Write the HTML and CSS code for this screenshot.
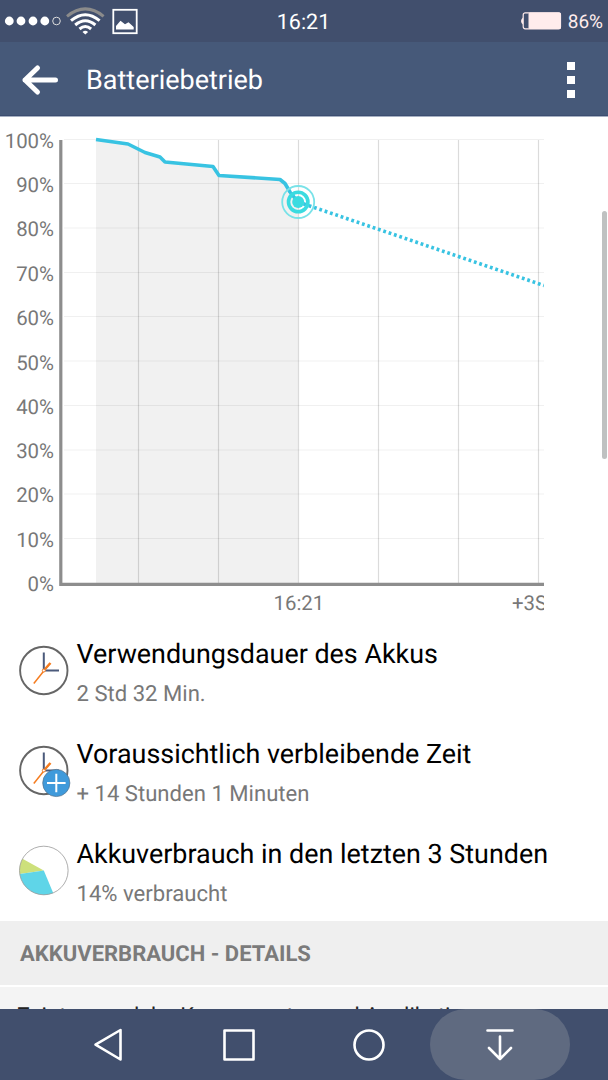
FILE: index.html
```html
<!DOCTYPE html>
<html lang="de">
<head>
	<title>Batteriebetrieb</title>
	<meta charset="utf-8">
	<link rel="stylesheet" href="styles.css">
</head>
<body>
	<header>
		<div class="status">
			<svg class="signal" width="140" height="42" viewBox="0 0 140 42">
				<g fill="#fff">
					<circle cx="9.3" cy="21" r="4.4"/>
					<circle cx="21" cy="21" r="4.4"/>
					<circle cx="33" cy="21" r="4.4"/>
					<circle cx="44.8" cy="21" r="4.4"/>
				</g>
				<circle cx="56.5" cy="21" r="3.8" fill="none" stroke="#ddd" stroke-width="1"/>
				<g fill="none" stroke="#fff" stroke-width="3">
					<path d="M67 16.3Q85.3 1.5 103.6 16.3" stroke="#8b8b8b"/>
					<path d="M71 20.7Q85.3 8.7 99.6 20.7"/>
					<path d="M75.2 25Q85.3 16.5 95.4 25"/>
					<path d="M79.5 29Q85.3 24 91.1 29"/>
				</g>
				<path d="M82.5 32Q85.3 29.5 88.1 32L85.3 34.5Z" fill="#fff"/>
				<rect x="113.3" y="9.8" width="23.4" height="23.4" fill="none" stroke="#fff" stroke-width="1.8"/>
				<path d="M116 29.5V26L120.5 20.8L125 24.3L128.5 22.3L133.7 27V29.5Z" fill="#fff"/>
			</svg>
			<span class="clock">16:21</span>
			<div class="battery">
				<svg width="42" height="20" viewBox="0 0 42 20">
					<path d="M3 6.5Q1 8 1 10T3 13.5Z" fill="#ffecec"/>
					<rect x="3.2" y="1.8" width="37.3" height="16" rx="2" fill="none" stroke="#ffecec" stroke-width="1.2"/>
					<rect x="8.5" y="1.5" width="32.5" height="16.5" rx="1.5" fill="#ffecec"/>
				</svg>
				<span>86%</span>
			</div>
		</div>
		<div class="toolbar">
			<svg width="38" height="32" viewBox="0 0 38 32">
				<path d="M34.5 16H4M16.5 4L4 16L16.5 28" fill="none" stroke="#fff" stroke-width="5" stroke-linecap="round" stroke-linejoin="round"/>
			</svg>
			<h1>Batteriebetrieb</h1>
			<div class="more"><i></i><i></i><i></i></div>
		</div>
	</header>

	<main>
		<section class="chart">
			<svg width="544" height="500" viewBox="0 117 544 500">
				<path d="M96 139.5L128 144L145 152.5L160 157L165 162L213 166.5L219 175.5L280 179.5L286 184L290 192L298 202V583H96Z" fill="#f1f1f1"/>
				<path class="rows" d="M64 139.5H544M64 183.5H544M64 228H544M64 272.5H544M64 316.5H544M64 361H544M64 405.5H544M64 450H544M64 494H544M64 538.5H544"/>
				<path class="cols" d="M138.5 140V583M218.5 140V583M298.5 140V583M378.5 140V583M458.5 140V583M538.5 140V583"/>
				<path d="M60.8 140V584.3H544" fill="none" stroke="#8d8d8d" stroke-width="3.2"/>
				<path class="line" d="M96 139.5L128 144L145 152.5L160 157L165 162L213 166.5L219 175.5L280 179.5L285 183.5L290 192L298 202"/>
				<path class="forecast" d="M298 202L544 285.5"/>
				<circle cx="298.2" cy="202" r="16" fill="none" stroke="#79e2e8" stroke-width="1.8"/>
				<circle cx="298.2" cy="202" r="9.7" fill="none" stroke="#3bdbe0" stroke-width="3.6"/>
				<circle cx="298.2" cy="202" r="6" fill="#3bdbe0"/>
				<g class="percent">
					<text x="54" y="148">100%</text>
					<text x="54" y="191.5">90%</text>
					<text x="54" y="236">80%</text>
					<text x="54" y="280.5">70%</text>
					<text x="54" y="325">60%</text>
					<text x="54" y="369.5">50%</text>
					<text x="54" y="413.5">40%</text>
					<text x="54" y="457.5">30%</text>
					<text x="54" y="502">20%</text>
					<text x="54" y="546.5">10%</text>
					<text x="54" y="591">0%</text>
				</g>
				<text x="273.5" y="610">16:21</text>
				<text x="512" y="610">+3Std.</text>
			</svg>
		</section>

		<ul class="info">
			<li>
				<svg width="52" height="52" viewBox="0 0 52 52">
					<circle cx="25.8" cy="26.5" r="23.7" fill="#fff" stroke="#666" stroke-width="1.9"/>
					<path d="M25.8 8.5V26.5H41" fill="none" stroke="#4b5a7b" stroke-width="2"/>
					<path d="M15.8 39.5L32 19.3" stroke="#f57c1f" stroke-width="1.5"/>
					<path d="M27.5 24.5L32.5 19" stroke="#f57c1f" stroke-width="2.4"/>
					<circle cx="25.8" cy="26.5" r="1.5" fill="#fff" stroke="#f57c1f"/>
				</svg>
				<div>
					<h2>Verwendungsdauer des Akkus</h2>
					<p>2 Std 32 Min.</p>
				</div>
			</li>
			<li>
				<svg width="54" height="54" viewBox="0 0 54 54">
					<circle cx="25.8" cy="26.5" r="23.7" fill="#fff" stroke="#666" stroke-width="1.9"/>
					<path d="M25.8 8.5V26.5H41" fill="none" stroke="#4b5a7b" stroke-width="2"/>
					<path d="M15.8 39.5L32 19.3" stroke="#f57c1f" stroke-width="1.5"/>
					<path d="M27.5 24.5L32.5 19" stroke="#f57c1f" stroke-width="2.4"/>
					<circle cx="25.8" cy="26.5" r="1.5" fill="#fff" stroke="#f57c1f"/>
					<circle cx="38.3" cy="39" r="13.6" fill="#3f9adb" stroke="#55718b" stroke-width=".7"/>
					<path d="M29 39H47.6M38.3 29.7V48.3" stroke="#fff" stroke-width="2"/>
				</svg>
				<div>
					<h2>Voraussichtlich verbleibende Zeit</h2>
					<p>+ 14 Stunden 1 Minuten</p>
				</div>
			</li>
			<li>
				<svg width="52" height="52" viewBox="0 0 52 52">
					<g transform="translate(0 .5)">
						<path d="M25.8 26L1.7 29.5A24.3 24.3 0 0 1 4.5 14.3Z" fill="#cde07b"/>
						<path d="M25.8 26L35.2 48.5A24.3 24.3 0 0 1 1.7 29.5Z" fill="#5fd5e8"/>
						<circle cx="25.8" cy="26" r="24.3" fill="none" stroke="#999" stroke-width=".8"/>
					</g>
				</svg>
				<div>
					<h2>Akkuverbrauch in den letzten 3 Stunden</h2>
					<p>14% verbraucht</p>
				</div>
			</li>
		</ul>

		<h3>AKKUVERBRAUCH - DETAILS</h3>
		<p class="hint">Zeigt an, welche Komponenten und Applikationen</p>
		<div class="scrollbar"></div>
	</main>

	<nav>
		<svg width="32" height="36" viewBox="0 0 32 36"><path d="M28.5 3V32.5L3.5 17.7Z"/></svg>
		<svg width="36" height="36" viewBox="0 0 36 36"><rect x="3.5" y="3.5" width="29" height="29"/></svg>
		<svg width="36" height="36" viewBox="0 0 36 36"><circle cx="18" cy="18" r="14.5"/></svg>
		<div class="pull">
			<svg width="32" height="36" viewBox="0 0 32 36"><path d="M3.5 3.5H28.5M16 9.5V32M5 21L16 32L27 21"/></svg>
		</div>
	</nav>
</body>
</html>
```

FILE: styles.css
```css
:root{
	--bar-dark: #414f6d;
	--bar-blue: #465979;
	--grey: #787878;
}
*{
	margin: 0;
	padding: 0;
	box-sizing: border-box;
}
body{
	width: 608px;
	height: 1080px;
	display: flex;
	flex-direction: column;
	overflow: hidden;
	background: white;
	font-family: Roboto, sans-serif;
	text-rendering: geometricPrecision;
}
svg{
	display: block;
	flex: none;
}
.status{
	height: 42px;
	display: grid;
	grid-template-columns: 1fr auto 1fr;
	align-items: center;
	background: var(--bar-dark);
	color: white;
}
.clock{
	font-size: 21.5px;
	line-height: 26px;
	padding-top: 4px;
	margin-left: -1px;
}
.battery{
	display: flex;
	align-items: center;
	justify-content: flex-end;
	gap: 6px;
	padding-right: 5px;
	color: #ffecec;
	font-size: 19px;
}
.battery span{
	padding-top: 1px;
}
.toolbar{
	height: 75px;
	display: flex;
	align-items: center;
	padding: 1px 33px 0 21px;
	background: var(--bar-blue);
	border-bottom: 1px solid #a6b0c2;
	box-shadow: inset 0 -1px #3c4d70;
	color: white;
}
h1{
	flex: 1;
	padding-left: 27px;
	font-size: 27px;
	font-weight: 400;
}
.more{
	display: flex;
	flex-direction: column;
	gap: 6px;
}
.more i{
	width: 8px;
	height: 8px;
	background: white;
}
main{
	position: relative;
	flex: 1;
	min-height: 0;
	overflow: hidden;
}
.chart{
	height: 500px;
}
.chart text{
	fill: var(--grey);
	font-size: 20.4px;
}
.percent{
	text-anchor: end;
}
.rows, .cols{
	fill: none;
	stroke: rgba(0, 0, 0, 0.06);
	stroke-width: 1.2;
}
.cols{
	stroke: rgba(0, 0, 0, 0.14);
}
.line, .forecast{
	fill: none;
	stroke: #38c3e2;
	stroke-width: 3.6;
	stroke-linejoin: round;
}
.forecast{
	stroke-dasharray: 2.8 2.83;
}
.info{
	list-style: none;
	padding-top: 4px;
}
.info li{
	height: 100px;
	display: flex;
	padding: 23px 0 0 18px;
}
.info li div{
	width: 500px;
	margin-top: -6px;
	margin-left: 6.5px;
}
.info li:nth-child(2) div{
	margin-left: 4.5px;
}
h2{
	color: black;
	font-size: 26.9px;
	line-height: 32px;
	font-weight: 400;
	white-space: nowrap;
}
.info p{
	margin-top: 9px;
	color: var(--grey);
	font-size: 22.1px;
	line-height: 30px;
}
h3{
	height: 64px;
	padding-left: 20px;
	background: #efefef;
	color: #7b7b7b;
	font-size: 22px;
	line-height: 68px;
}
.hint{
	height: 40px;
	margin-top: 2px;
	padding: 16px 0 0 17px;
	background: #f4f4f4;
	color: #222;
	font-size: 22px;
	line-height: 28px;
	white-space: nowrap;
}
.scrollbar{
	position: absolute;
	top: 94px;
	right: 1px;
	width: 5px;
	height: 248px;
	border-radius: 3px;
	background: #bfc1c1;
}
nav{
	height: 71px;
	display: flex;
	align-items: center;
	padding-left: 92px;
	background: var(--bar-dark);
}
nav svg{
	fill: none;
	stroke: white;
	stroke-width: 2.6;
	stroke-linejoin: round;
	stroke-linecap: round;
}
nav svg:nth-child(2){
	margin-left: 96.5px;
}
nav svg:nth-child(3){
	margin-left: 94.5px;
}
.pull{
	width: 140px;
	height: 71px;
	margin-left: 43px;
	display: flex;
	align-items: center;
	justify-content: center;
	border-radius: 36px;
	background: #5f6a80;
}
```
